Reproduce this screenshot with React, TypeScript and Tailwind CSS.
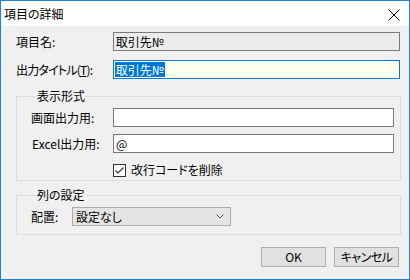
import React from "react";

const font = { fontFamily: '"Noto Sans CJK JP", "Noto Sans", sans-serif' };

export default function App() {
  return (
    <div
      className="w-[410px] h-[280px] border border-[#1883d7] flex flex-col text-[12px] leading-[16px] text-black overflow-hidden [font-feature-settings:'palt']"
      style={font}
    >
      <div className="h-[25px] bg-white flex items-center justify-between pl-[3px] pr-[9px] shrink-0">
        <span className="mt-[1px]">項目の詳細</span>
        <svg width="12" height="12" viewBox="0 0 12 12" className="mt-[3px]">
          <path d="M0.5 0.5 L11.5 11.5 M11.5 0.5 L0.5 11.5" stroke="#000" strokeWidth="1" />
        </svg>
      </div>
      <div className="flex-1 bg-[#f0f0f0] flex flex-col pl-[15px] pr-[9px]">
        <div className="flex items-center mt-[6px] h-[19px]">
          <span className="w-[97px]">項目名:</span>
          <div className="w-[288px] h-[19px] border border-[#7a7a7a] bg-[#ececec] pl-[2px] flex items-center">
            取引先№
          </div>
        </div>
        <div className="flex items-center mt-[9px] h-[19px]">
          <span className="w-[97px] tracking-[-0.8px]">出力タイトル(<span className="underline">T</span>):</span>
          <div className="w-[288px] h-[19px] border border-[#0078d7] bg-[#fffff0] pl-[1px] flex items-center">
            <span className="bg-[#0078d7] text-white px-[1px] leading-[15px]">取引先№</span>
          </div>
        </div>
        <fieldset className="mt-[9px] w-[385px] border border-[#dcdcdc] pl-[14px] pb-[3px]">
          <legend className="ml-[5px] px-[1px] leading-[16px]">表示形式</legend>
          <div className="flex items-center mt-[4px] h-[19px]">
            <span className="w-[82px]">画面出力用:</span>
            <div className="w-[281px] h-[19px] border border-[#7a7a7a] bg-white" />
          </div>
          <div className="flex items-center mt-[7px] h-[19px]">
            <span className="w-[82px] pl-[1px]">Excel出力用:</span>
            <div className="w-[281px] h-[19px] border border-[#7a7a7a] bg-white pl-[2px] flex items-center">@</div>
          </div>
          <div className="flex items-center mt-[10px] h-[14px] pl-[82px]">
            <div className="w-[13px] h-[13px] border border-[#333333] bg-white flex items-center justify-center">
              <svg width="11" height="11" viewBox="0 0 11 11">
                <path d="M1.5 5.5 L4 8 L9.5 2.5" stroke="#333" strokeWidth="1.2" fill="none" />
              </svg>
            </div>
            <span className="ml-[5px]">改行コードを削除</span>
          </div>
        </fieldset>
        <fieldset className="mt-[6px] w-[385px] border border-[#dcdcdc] pl-[14px] pb-[8px]">
          <legend className="ml-[5px] px-[1px] leading-[16px]">列の設定</legend>
          <div className="flex items-center mt-[4px] h-[19px]">
            <span className="w-[41px]">配置:</span>
            <div className="w-[159px] h-[19px] border border-[#acacac] bg-[#e5e5e5] pl-[3px] pr-[6px] flex items-center justify-between">
              <span>設定なし</span>
              <svg width="8" height="5" viewBox="0 0 8 5">
                <path d="M0.5 0.5 L4 4 L7.5 0.5" stroke="#555" strokeWidth="1" fill="none" />
              </svg>
            </div>
          </div>
        </fieldset>
        <div className="flex justify-end gap-[8px] mt-[12px] pr-[1px]">
          <div className="w-[65px] h-[20px] border border-[#adadad] bg-[#e1e1e1] flex items-center justify-center">OK</div>
          <div className="w-[65px] h-[20px] border border-[#adadad] bg-[#e1e1e1] flex items-center justify-center tracking-[-0.5px]">キャンセル</div>
        </div>
      </div>
    </div>
  );
}
